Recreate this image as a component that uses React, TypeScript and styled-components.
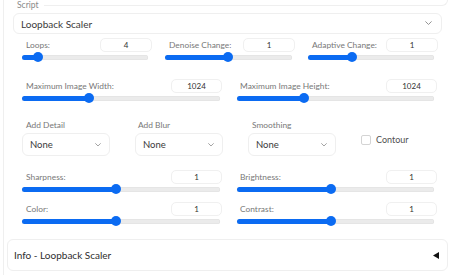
import React from "react";
import styled, { createGlobalStyle } from "styled-components";

const Global = createGlobalStyle`
  html, body { margin: 0; padding: 0; background: #fff; }
  body {
    font-family: Lato, "Noto Sans", sans-serif;
    width: 450px; height: 275px; overflow: hidden;
  }
  * { box-sizing: border-box; }
`;

const BLUE = "#0b6bf2";

const Frame = styled.div`
  margin-left: 3px;
  border-left: 1px solid #efefef;
  height: 275px;
  display: flex;
  flex-direction: column;
`;

const ScriptHead = styled.div`
  display: flex;
  align-items: flex-start;
  height: 10px;
`;

const ScriptLabel = styled.span`
  margin-left: 13px;
  font-size: 8.5px;
  line-height: 10px;
  color: #8a8a8a;
`;

const Cap = styled.div`
  flex: 1;
  margin-left: 5px;
  margin-right: 2px;
  height: 6px;
  border-bottom: 1px solid #efefef;
  border-right: 1px solid #efefef;
  border-bottom-right-radius: 6px;
`;

const Select = styled.div<{ $h: number; $pl: number; $pr: number; $fs: number }>`
  height: ${(p) => p.$h}px;
  border: 1px solid #efefef;
  border-radius: 6px;
  display: flex;
  align-items: center;
  justify-content: space-between;
  padding: 0 ${(p) => p.$pr}px 0 ${(p) => p.$pl}px;
  font-size: ${(p) => p.$fs}px;
  color: #3a3a3a;
  background: #fff;
`;

const MainSelectWrap = styled.div`
  margin: 3px 8px 0 9px;
`;

const Body = styled.div`
  padding-left: 18px;
  display: flex;
  flex-direction: column;
`;

const Grid = styled.div<{ $cols: string; $gap: number; $mt: number }>`
  display: grid;
  grid-template-columns: ${(p) => p.$cols};
  column-gap: ${(p) => p.$gap}px;
  margin-top: ${(p) => p.$mt}px;
`;

const SliderBox = styled.div`
  display: flex;
  flex-direction: column;
`;

const SliderHead = styled.div`
  display: flex;
  align-items: center;
  justify-content: space-between;
  height: 15px;
`;

const Label = styled.span<{ $pl?: number }>`
  padding-left: ${(p) => p.$pl ?? 4}px;
  font-size: 8.4px;
  line-height: 10px;
  color: #787878;
`;

const NumBox = styled.div<{ $w: number }>`
  width: ${(p) => p.$w}px;
  height: 14px;
  border: 1px solid #f0f0f0;
  border-radius: 5px;
  font-size: 8px;
  color: #333;
  display: flex;
  align-items: center;
  justify-content: center;
`;

const TrackRow = styled.div<{ $mr: number }>`
  height: 10px;
  margin-right: ${(p) => p.$mr}px;
  display: flex;
  align-items: center;
`;

const Track = styled.div`
  position: relative;
  flex: 1;
  height: 5px;
  border-radius: 3px;
  background: #ebebeb;
  box-shadow: inset 0 0 0 0.5px #e0e0e0;
`;

const Fill = styled.div`
  height: 100%;
  border-radius: 3px;
  background: ${BLUE};
`;

const Thumb = styled.div`
  position: absolute;
  top: 50%;
  width: 10px;
  height: 10px;
  margin: -5px 0 0 -5px;
  border-radius: 50%;
  background: ${BLUE};
`;

const DropCol = styled.div`
  display: flex;
  flex-direction: column;
  gap: 3px;
`;

const CheckCol = styled.div`
  display: flex;
  align-items: center;
  gap: 5px;
  padding-top: 15px;
  align-self: start;
`;

const Box = styled.div`
  width: 10px;
  height: 10px;
  border: 1px solid #d4d4d4;
  border-radius: 2px;
  background: #fff;
`;

const CheckLabel = styled.span`
  font-size: 9px;
  color: #505050;
  line-height: 10px;
`;

const Info = styled.div`
  margin: 13px 2px 0 3px;
  height: 32px;
  border: 1px solid #efefef;
  border-radius: 6px;
  display: flex;
  align-items: center;
  justify-content: space-between;
  padding: 0 8px 0 6px;
  font-size: 10px;
  color: #2e2e2e;
`;

const Chevron = ({ w = 7 }: { w?: number }) => (
  <svg width={w} height={w * 0.6} viewBox="0 0 10 6">
    <path d="M1 1 L5 5 L9 1" fill="none" stroke="#888" strokeWidth="1.3" strokeLinecap="round" strokeLinejoin="round" />
  </svg>
);

const Triangle = () => (
  <svg width="6" height="7" viewBox="0 0 6 7">
    <polygon points="6,0 6,7 0,3.5" fill="#111" />
  </svg>
);

type SliderProps = { label: string; value: string; frac: number; inputW: number; mr: number; lpl?: number };

const Slider = ({ label, value, frac, inputW, mr, lpl }: SliderProps) => (
  <SliderBox>
    <SliderHead>
      <Label $pl={lpl}>{label}</Label>
      <NumBox $w={inputW}>{value}</NumBox>
    </SliderHead>
    <TrackRow $mr={mr}>
      <Track>
        <Fill style={{ width: `${frac * 100}%` }} />
        <Thumb style={{ left: `${frac * 100}%` }} />
      </Track>
    </TrackRow>
  </SliderBox>
);

const Drop = ({ label, lpl }: { label: string; lpl?: number }) => (
  <DropCol>
    <Label $pl={lpl}>{label}</Label>
    <Select $h={23} $pl={7} $pr={8} $fs={9.5}>
      <span>None</span>
      <Chevron w={6} />
    </Select>
  </DropCol>
);

export default function App() {
  return (
    <>
      <Global />
      <Frame>
        <ScriptHead>
          <ScriptLabel>Script</ScriptLabel>
          <Cap />
        </ScriptHead>
        <MainSelectWrap>
          <Select $h={21} $pl={7} $pr={9} $fs={10}>
            <span>Loopback Scaler</span>
            <Chevron />
          </Select>
        </MainSelectWrap>
        <Body>
          <Grid $cols="130px 130px 130px" $gap={13} $mt={3}>
            <Slider label="Loops:" value="4" frac={0.127} inputW={52} mr={4} />
            <Slider label="Denoise Change:" value="1" frac={0.496} inputW={52} mr={3} />
            <Slider label="Adaptive Change:" value="1" frac={0.35} inputW={52} mr={4} />
          </Grid>
          <Grid $cols="200px 200px" $gap={15} $mt={16}>
            <Slider label="Maximum Image Width:" value="1024" frac={0.338} inputW={51} mr={2} />
            <Slider label="Maximum Image Height:" value="1024" frac={0.34} inputW={51} mr={3} lpl={3} />
          </Grid>
          <Grid $cols="88px 88px 88px 80px" $gap={25} $mt={17}>
            <Drop label="Add Detail" />
            <Drop label="Add Blur" lpl={3} />
            <Drop label="Smoothing" />
            <CheckCol>
              <Box />
              <CheckLabel>Contour</CheckLabel>
            </CheckCol>
          </Grid>
          <Grid $cols="200px 200px" $gap={15} $mt={13}>
            <Slider label="Sharpness:" value="1" frac={0.475} inputW={51} mr={2} />
            <Slider label="Brightness:" value="1" frac={0.477} inputW={51} mr={3} lpl={3} />
          </Grid>
          <Grid $cols="200px 200px" $gap={15} $mt={7}>
            <Slider label="Color:" value="1" frac={0.475} inputW={51} mr={2} />
            <Slider label="Contrast:" value="1" frac={0.477} inputW={51} mr={3} lpl={3} />
          </Grid>
        </Body>
        <Info>
          <span>Info - Loopback Scaler</span>
          <Triangle />
        </Info>
      </Frame>
    </>
  );
}
